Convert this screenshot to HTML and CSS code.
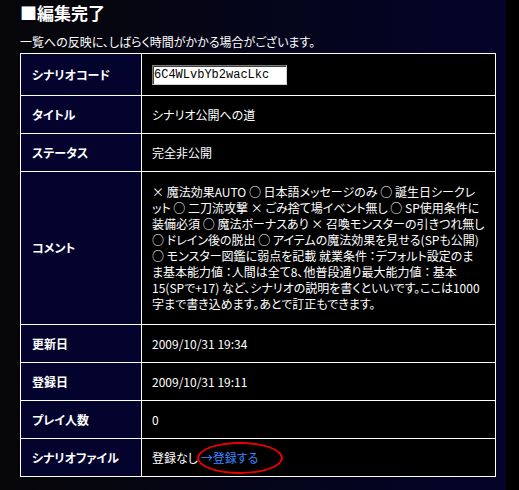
FILE: index.html
```html
<!DOCTYPE html>
<html lang="ja">
<head>
  <meta charset="UTF-8" />
  <meta name="viewport" content="width=device-width, initial-scale=1.0" />
  <title>編集完了</title>
  <link rel="stylesheet" href="styles.css">
</head>
<body>
  <div class="page">
    <h1 class="title">■編集完了</h1>
    <p class="note">一覧への反映に、しばらく時間がかかる場合がございます。</p>

    <table class="info">
      <colgroup>
        <col class="col-label">
        <col>
      </colgroup>
      <tr class="first">
        <th>シナリオコード</th>
        <td><input class="code" type="text" value="6C4WLvbYb2wacLkc" readonly></td>
      </tr>
      <tr>
        <th>タイトル</th>
        <td>シナリオ公開への道</td>
      </tr>
      <tr>
        <th>ステータス</th>
        <td>完全非公開</td>
      </tr>
      <tr>
        <th>コメント</th>
        <td class="comment">
          × 魔法効果AUTO ○ 日本語メッセージのみ ○ 誕生日シークレ<br>
          ット ○ 二刀流攻撃 × ごみ捨て場イベント無し ○ SP使用条件に<br>
          装備必須 ○ 魔法ボーナスあり × 召喚モンスターの引きつれ無し<br>
          ○ ドレイン後の脱出 ○ アイテムの魔法効果を見せる(SPも公開)<br>
          ○ モンスター図鑑に弱点を記載 就業条件 ：デフォルト設定のま<br>
          ま基本能力値 ：人間は全て8、他普段通り最大能力値 ： 基本<br>
          15(SPで+17) など、シナリオの説明を書くといいです。ここは1000<br>
          字まで書き込めます。あとで訂正もできます。
        </td>
      </tr>
      <tr>
        <th>更新日</th>
        <td>2009/10/31 19:34</td>
      </tr>
      <tr>
        <th>登録日</th>
        <td>2009/10/31 19:11</td>
      </tr>
      <tr>
        <th>プレイ人数</th>
        <td>0</td>
      </tr>
      <tr>
        <th>シナリオファイル</th>
        <td>登録なし <a class="upload" href="#">→登録する</a></td>
      </tr>
    </table>
  </div>
</body>
</html>
```

FILE: styles.css
```css
:root {
  --navy: #03032e;
  --white: #fff;
  --link: #3a86ff;
}

* {
  margin: 0;
  padding: 0;
  box-sizing: border-box;
}

body {
  background-color: #000;
  color: var(--white);
  font-family: "Noto Sans CJK JP", "Liberation Sans", sans-serif;
  font-size: 12px;
  font-feature-settings: "palt";
}

.page {
  width: 506px;
  min-height: 100vh;
  padding: 3px 10px 20px 20px;
  background: linear-gradient(to right, #060608, #050518 45%, #04042a);
}

.title {
  font-size: 17px;
  line-height: 20px;
  font-weight: bold;
  margin-bottom: 11px;
}

.note {
  line-height: 16px;
  margin-bottom: 3px;
}

.info {
  width: 476px;
  table-layout: fixed;
  border-collapse: collapse;
}

.col-label {
  width: 121px;
}

.info th,
.info td {
  border: 1px solid var(--white);
  height: 38px;
  line-height: 16px;
  text-align: left;
  vertical-align: middle;
}

.info th {
  background-color: var(--navy);
  font-weight: bold;
  padding: 0 10px 0 11px;
}

.info td {
  background-color: #000;
  padding: 0 10px;
}

.info .first th,
.info .first td {
  height: 42px;
}

.info td.comment {
  padding: 12px 8px 12px 10px;
  white-space: nowrap;
}

.code {
  display: block;
  width: 135px;
  height: 20px;
  padding: 0 1px;
  font-family: "Liberation Mono", monospace;
  font-size: 12px;
  color: #000;
  background: #fff;
  border: 1px solid;
  border-color: #7a7a7a #d4d0c8 #d4d0c8 #7a7a7a;
  box-shadow: inset 1px 1px 0 #404040;
  outline: none;
}

.upload {
  position: relative;
  color: var(--link);
  text-decoration: none;
}

/* red marker drawn round the link */
.upload::after {
  content: "";
  position: absolute;
  left: -4px;
  top: -7px;
  width: 82px;
  height: 28px;
  border: 2px solid #e00;
  border-radius: 50%;
}
```
